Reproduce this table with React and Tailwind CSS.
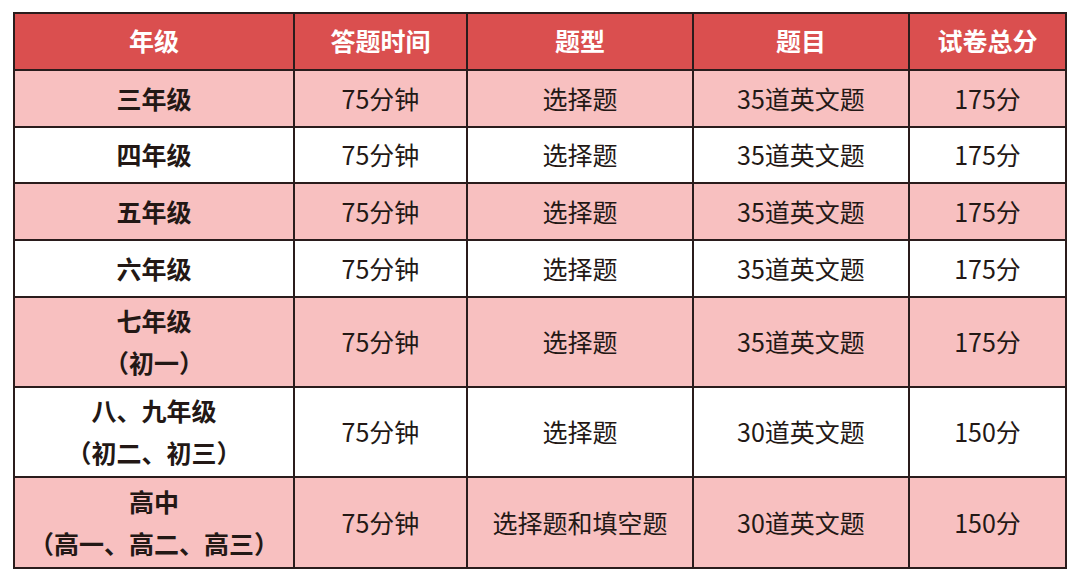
const header = ["年级", "答题时间", "题型", "题目", "试卷总分"];

const rows = [
  { grade: ["三年级"], time: "75分钟", type: "选择题", q: "35道英文题", score: "175分", pink: true },
  { grade: ["四年级"], time: "75分钟", type: "选择题", q: "35道英文题", score: "175分", pink: false },
  { grade: ["五年级"], time: "75分钟", type: "选择题", q: "35道英文题", score: "175分", pink: true },
  { grade: ["六年级"], time: "75分钟", type: "选择题", q: "35道英文题", score: "175分", pink: false },
  { grade: ["七年级", "（初一）"], time: "75分钟", type: "选择题", q: "35道英文题", score: "175分", pink: true, tall: "h-[88px]" },
  { grade: ["八、九年级", "（初二、初三）"], time: "75分钟", type: "选择题", q: "30道英文题", score: "150分", pink: false, tall: "h-[88px]" },
  { grade: ["高中", "（高一、高二、高三）"], time: "75分钟", type: "选择题和填空题", q: "30道英文题", score: "150分", pink: true, tall: "h-[89px]" },
];

const heights = ["h-[55px]", "h-[54px]", "h-[55px]", "h-[55px]"];

const Cell = ({ bg, h, bold, children }) => (
  <div
    className={`${bg} ${h} flex flex-col items-center justify-center pb-[2px] text-[25px] leading-[42px] text-[#231815] ${
      bold ? "font-bold" : "font-normal"
    }`}
  >
    {children}
  </div>
);

export default function App() {
  return (
    <div
      className="w-[1080px] h-[582px] bg-white pt-[12px] pl-[13px]"
      style={{ fontFamily: '"Noto Sans CJK SC", "Noto Sans", sans-serif' }}
    >
      <div className="w-[1054px] grid grid-cols-[278px_171px_224px_214px_155px] gap-[2px] p-[2px] bg-[#2a1c1c]">
        {header.map((h) => (
          <div
            key={h}
            className="h-[55px] bg-[#da4f4f] flex items-center justify-center pb-[2px] text-white font-bold text-[25px]"
          >
            {h}
          </div>
        ))}
        {rows.map((r, i) => {
          const bg = r.pink ? "bg-[#f8c0c0]" : "bg-white";
          const h = r.tall ?? heights[i];
          return [
            <Cell key={i + "g"} bg={bg} h={h} bold>
              {r.grade.map((g) => (
                <span key={g}>{g}</span>
              ))}
            </Cell>,
            <Cell key={i + "t"} bg={bg} h={h}>
              {r.time}
            </Cell>,
            <Cell key={i + "y"} bg={bg} h={h}>
              {r.type}
            </Cell>,
            <Cell key={i + "q"} bg={bg} h={h}>
              {r.q}
            </Cell>,
            <Cell key={i + "s"} bg={bg} h={h}>
              {r.score}
            </Cell>,
          ];
        })}
      </div>
    </div>
  );
}
